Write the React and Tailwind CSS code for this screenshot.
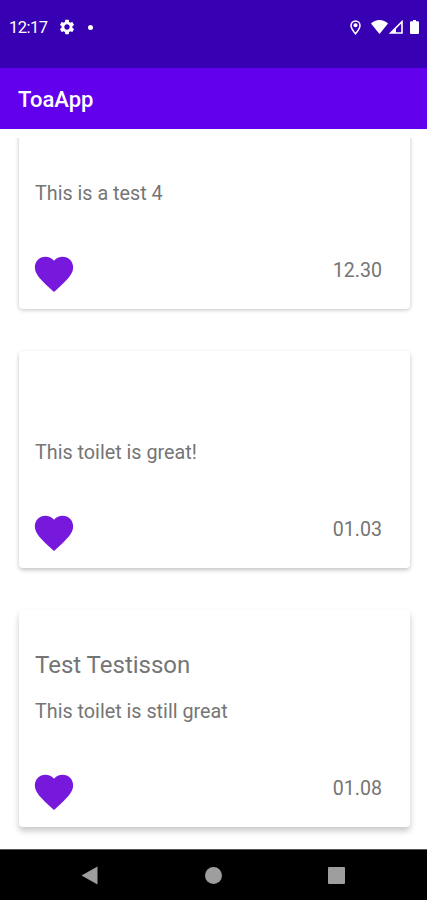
const reviews = [
  { id: 1, name: '', text: 'This is a test 4', rating: '12.30', shadow: 'shadow-[0_1px_4px_rgba(0,0,0,0.24)]' },
  { id: 2, name: '', text: 'This toilet is great!', rating: '01.03', shadow: 'shadow-[0_2px_4px_rgba(0,0,0,0.24)]' },
  { id: 3, name: 'Test Testisson', text: 'This toilet is still great', rating: '01.08', shadow: 'shadow-[0_4px_6px_rgba(0,0,0,0.22)]' },
]

function StatusBar() {
  return (
    <div className="flex h-[68px] shrink-0 items-start bg-[#3700b3] pt-[18px] pr-2 pl-[9px] text-white">
      <span className="w-[49px] text-[16.5px] leading-5 tracking-[-0.5px]">12:17</span>
      <svg className="h-[18px] w-[18px]" viewBox="0 0 24 24" fill="currentColor">
        <path d="M19.14 12.94c.04-.3.06-.61.06-.94 0-.32-.02-.64-.07-.94l2.03-1.58c.18-.14.23-.41.12-.61l-1.92-3.32c-.12-.22-.37-.29-.59-.22l-2.39.96c-.5-.38-1.03-.7-1.62-.94l-.36-2.54c-.04-.24-.24-.41-.48-.41h-3.84c-.24 0-.43.17-.47.41l-.36 2.54c-.59.24-1.13.57-1.62.94l-2.39-.96c-.22-.08-.47 0-.59.22L2.74 8.87c-.12.21-.08.47.12.61l2.03 1.58c-.05.3-.09.63-.09.94s.02.64.07.94l-2.03 1.58c-.18.14-.23.41-.12.61l1.92 3.32c.12.22.37.29.59.22l2.39-.96c.5.38 1.03.7 1.62.94l.36 2.54c.05.24.24.41.48.41h3.84c.24 0 .44-.17.47-.41l.36-2.54c.59-.24 1.13-.56 1.62-.94l2.39.96c.22.08.47 0 .59-.22l1.92-3.32c.12-.22.07-.47-.12-.61l-2.01-1.58zM12 15.6c-1.98 0-3.6-1.62-3.6-3.6s1.62-3.6 3.6-3.6 3.6 1.62 3.6 3.6-1.62 3.6-3.6 3.6z" />
      </svg>
      <span className="mt-[6.5px] ml-3 h-[5px] w-[5px] rounded-full bg-white" />

      <svg className="mt-[1.5px] ml-auto h-[15px] w-[11px]" viewBox="0 0 11 15">
        <path d="M5.5 1A4.5 4.5 0 0 0 1 5.5c0 3.1 4.5 8.300 4.500 8.300S10 8.600 10 5.500A4.500 4.500 0 0 0 5.500 1z" fill="none" stroke="currentColor" strokeWidth="1.5" />
        <circle cx="5.5" cy="5.2" r="2" fill="currentColor" />
      </svg>
      <svg className="mt-[2px] ml-[10px] h-[14px] w-[17px]" viewBox="0 0 17 14" fill="currentColor">
        <path d="M8.500 14 0 3.400C2.300 1.300 5.200 0 8.500 0S14.700 1.300 17 3.400z" />
      </svg>
      <svg className="mt-[2px] ml-px h-[14px] w-[14px]" viewBox="0 0 14 14">
        <path d="M13 1.700V13H1.700z" fill="none" stroke="currentColor" strokeWidth="1.600" />
        <path d="M7 7.700V13H1.700z" fill="currentColor" />
      </svg>
      <svg className="mt-[2px] ml-[7px] h-[14px] w-[9px]" viewBox="0 0 9 14" fill="currentColor">
        <path d="M3 0h3v1.300h2a1 1 0 0 1 1 1V13a1 1 0 0 1-1 1H1a1 1 0 0 1-1-1V2.300a1 1 0 0 1 1-1h2z" />
      </svg>
    </div>
  )
}

function ReviewCard({ review }) {
  return (
    <div className={`flex h-[217px] shrink-0 flex-col rounded-[4px] bg-white pt-[39px] pr-7 pl-4 text-[#757575] ${review.shadow}`}>
      <h2 className="h-8 text-[24px] leading-8">{review.name}</h2>
      <p className="mt-[19px] text-[19.75px] leading-6">{review.text}</p>
      <div className="mt-[45px] flex items-start justify-between">
        <svg className="-ml-1 h-[46px] w-[46px] text-[#7719dd]" viewBox="0 0 24 24" fill="currentColor">
          <path d="M12 21.350l-1.450-1.320C5.400 15.360 2 12.280 2 8.500 2 5.420 4.420 3 7.500 3c1.740 0 3.410.810 4.500 2.090C13.090 3.810 14.760 3 16.500 3 19.580 3 22 5.420 22 8.500c0 3.780-3.400 6.860-8.550 11.540L12 21.350z" />
        </svg>
        <span className="mt-2 text-[19.6px] leading-6">{review.rating}</span>
      </div>
    </div>
  )
}

function NavBar() {
  return (
    <div className="grid h-[51px] shrink-0 grid-cols-3 items-center border-t border-[#555] bg-black px-[29px] text-[#9e9e9e]">
      <svg className="-ml-0.5 h-[19px] w-[17px] justify-self-center" viewBox="0 0 17 19" fill="currentColor">
        <path d="M16.500 .5v18L.5 9.500z" />
      </svg>
      <span className="h-[17px] w-[17px] justify-self-center rounded-full bg-[#9e9e9e]" />
      <span className="h-[17px] w-[17px] justify-self-center rounded-[1px] bg-[#9e9e9e]" />
    </div>
  )
}

export default function App() {
  return (
    <div className="flex h-[900px] w-[427px] flex-col overflow-hidden bg-white font-['Roboto',sans-serif]">
      <StatusBar />
      <header className="flex h-[61px] shrink-0 items-center bg-[#6200ee] pt-px pl-[18px]">
        <h1 className="text-[22px] font-medium text-white">ToaApp</h1>
      </header>
      <main className="min-h-0 flex-1 pt-[9px] pb-[10px]">
        <div className="flex h-full flex-col justify-end gap-[42px] overflow-hidden pr-[17px] pb-[12px] pl-[19px]">
          {reviews.map((review) => (
            <ReviewCard key={review.id} review={review} />
          ))}
        </div>
      </main>
      <NavBar />
    </div>
  )
}
